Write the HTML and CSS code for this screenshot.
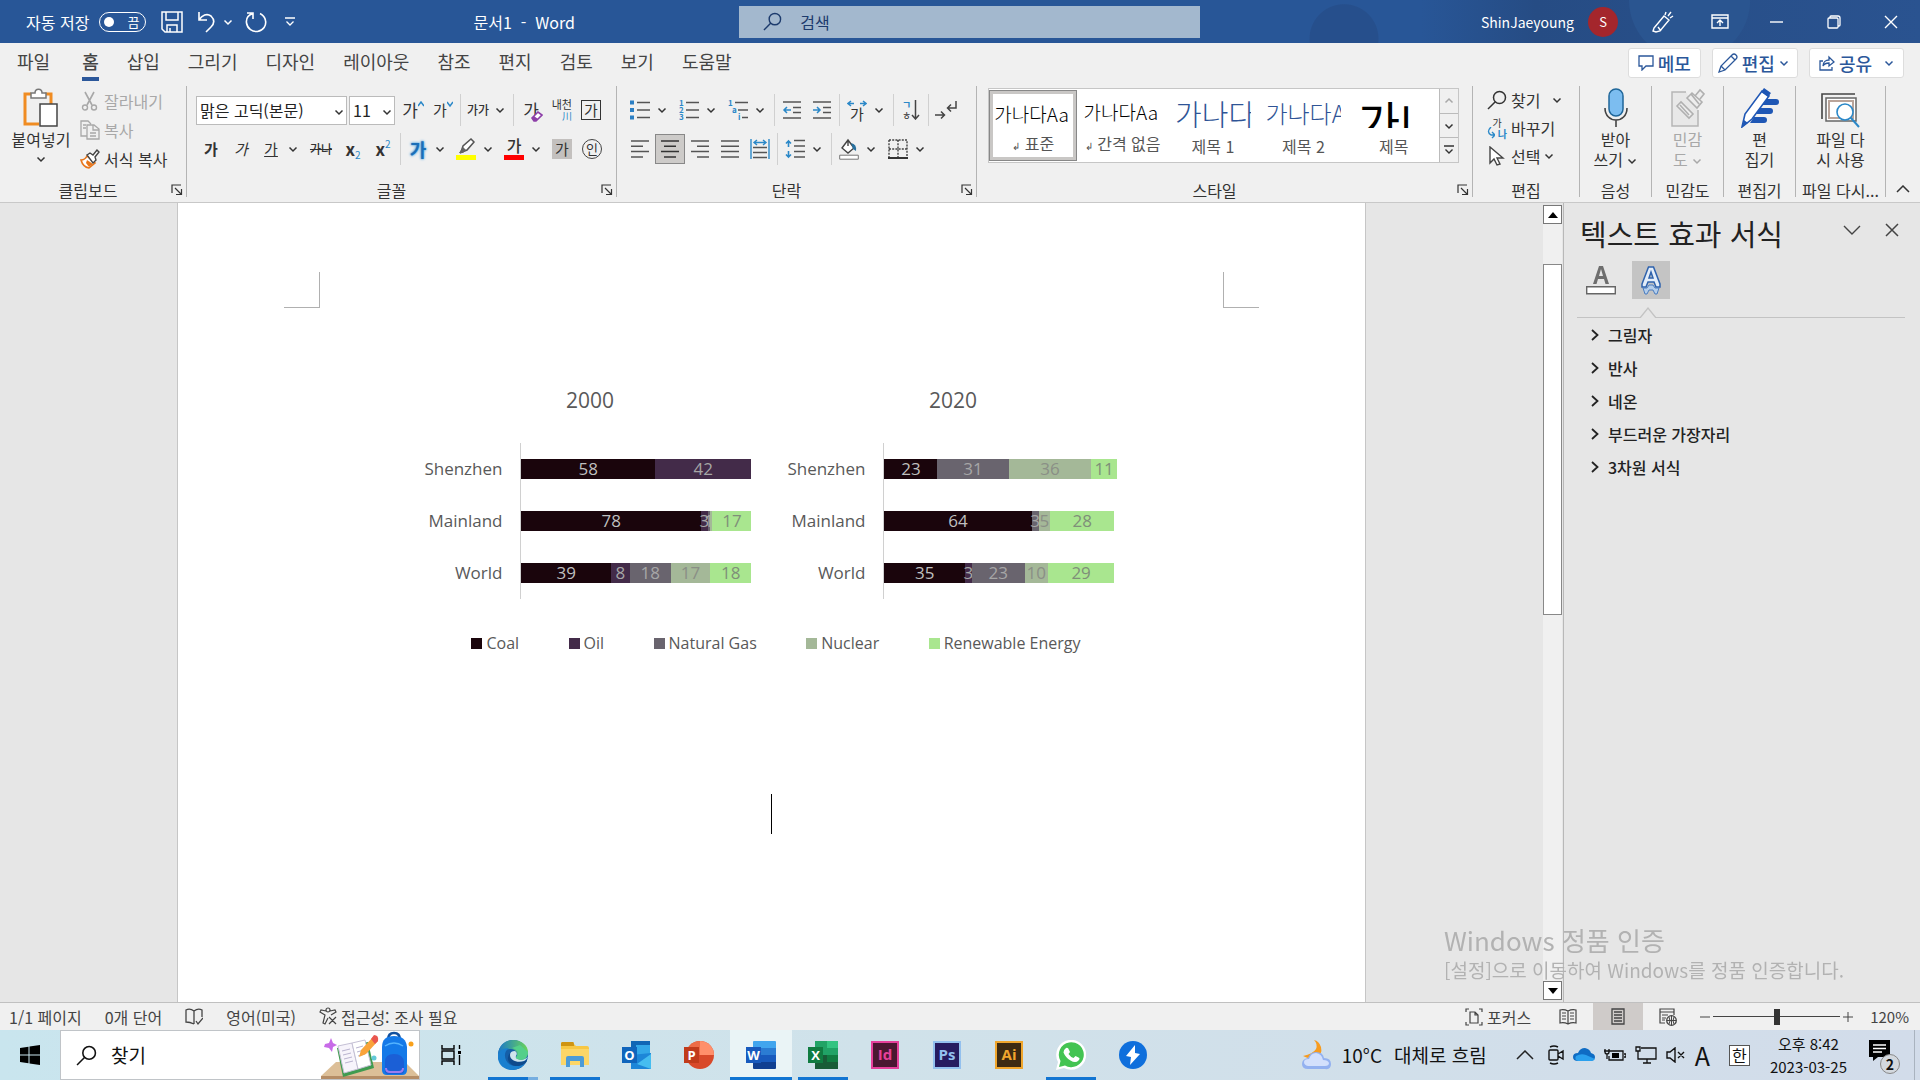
FILE: index.html
```html
<!doctype html>
<html lang="ko">
  <head>
    <meta charset="UTF-8" />
    <meta name="viewport" content="width=device-width, initial-scale=1.0" />
    <title>문서1 - Word</title>
    <link rel="stylesheet" href="styles.css">
  </head>
  <body>
    <svg class="sprite" aria-hidden="true">
      <symbol id="chev" viewBox="0 0 10 10"><path d="M1.500 3.500 5 7l3.500-3.500" fill="none" stroke="currentColor" stroke-width="1.500"/></symbol>
      <symbol id="launch" viewBox="0 0 12 12"><path d="M1 9V1h9M4 4l6 6M10.500 5v5.500H5" fill="none" stroke="currentColor" stroke-width="1.200"/></symbol>
      <symbol id="glass" viewBox="0 0 20 20"><g fill="none" stroke="currentColor" stroke-width="1.500"><circle cx="12.500" cy="7.500" r="6"/><path d="M8.300 11.700 1 19"/></g></symbol>
      <symbol id="right" viewBox="0 0 8 12"><path d="m1 1 5.500 5L1 11" fill="none" stroke="#222" stroke-width="1.800"/></symbol>
    </svg>

    <header class="titlebar">
      <div class="quick">
        <label class="autosave">자동 저장 <input type="checkbox" class="toggle-input"><span class="toggle">끔</span></label>
        <button class="quick-btn save" aria-label="저장"><svg width="22" height="22" viewBox="0 0 22 22"><path d="M1 1h20v20H4l-3-3zM5 1v8h12V1M6 21v-7h10v7M9 17v4" fill="none" stroke="#fff" stroke-width="1.500"/></svg></button>
        <button class="quick-btn undo" aria-label="실행 취소"><svg width="20" height="22" viewBox="0 0 20 22"><path d="M2 1v8h8M2 9c3-5 8-7 12-4 4 4 3 8 0 11l-5 5" fill="none" stroke="#fff" stroke-width="1.600"/></svg><svg class="tiny"><use href="#chev"/></svg></button>
        <button class="quick-btn redo" aria-label="다시 실행"><svg width="22" height="22" viewBox="0 0 22 22"><path d="M2 2h6v6M8 2.500C3 4 1 8 1.500 12c1 6 6 9 11 8.500 6-1 9-6 8-11-.5-3-2.500-5.500-5.500-7" fill="none" stroke="#fff" stroke-width="1.600"/></svg></button>
        <button class="quick-btn" aria-label="빠른 실행 도구 모음 사용자 지정"><svg width="10" height="10" viewBox="0 0 10 10"><path d="M0 1h10M1.500 4.500 5 8l3.500-3.500" fill="none" stroke="#fff" stroke-width="1.300"/></svg></button>
        <span class="doc-name">문서1&nbsp; -&nbsp; Word</span>
      </div>
      <label class="search"><svg width="19" height="19"><use href="#glass"/></svg><input type="search" placeholder="검색" aria-label="검색"></label>
      <div class="account">
        <span class="user">ShinJaeyoung</span><span class="avatar">S</span>
        <button class="win-btn" aria-label="그리기 도구"><svg width="22" height="22" viewBox="0 0 22 22"><path d="M2 17 12 5l5 4-9 11-4 1-3-1zM6 16l3 4M13 4l1-3M16 5l3-4M18 7l3-2" fill="none" stroke="#fff" stroke-width="1.400"/></svg></button>
        <button class="win-btn" aria-label="리본 메뉴 표시 옵션"><svg width="18" height="16" viewBox="0 0 18 16"><path d="M1 1h16v13H1zM1 4h16M9 12V6M6 9l3-3 3 3" fill="none" stroke="#fff" stroke-width="1.400"/></svg></button>
        <button class="win-btn" aria-label="최소화"><svg width="14" height="14" viewBox="0 0 14 14"><path d="M0 7h13" stroke="#fff" stroke-width="1.400"/></svg></button>
        <button class="win-btn" aria-label="이전 크기로 복원"><svg width="14" height="14" viewBox="0 0 14 14"><path d="M3 3V2q0-1 1-1h7q2 0 2 2v7q0 1-1 1h-1M1 4q0-1 1-1h8q1 0 1 1v8q0 1-1 1H2q-1 0-1-1z" fill="none" stroke="#fff" stroke-width="1.300"/></svg></button>
        <button class="win-btn" aria-label="닫기"><svg width="14" height="14" viewBox="0 0 14 14"><path d="m1 1 12 12M13 1 1 13" stroke="#fff" stroke-width="1.400"/></svg></button>
      </div>
    </header>

    <nav class="tabs">
      <a href="#file" class="file">파일</a><a href="#home" class="active">홈</a><a href="#insert">삽입</a><a href="#draw">그리기</a><a href="#design">디자인</a><a href="#layout">레이아웃</a><a href="#refs">참조</a><a href="#mail">편지</a><a href="#review">검토</a><a href="#view">보기</a><a href="#help">도움말</a>
      <div class="tab-actions">
        <button><svg width="16" height="16" viewBox="0 0 16 16"><path d="M1 1h14v10H8l-4 4v-4H1z" fill="none" stroke="currentColor" stroke-width="1.300"/></svg>메모</button>
        <button><svg width="20" height="20" viewBox="0 0 20 20"><path d="m1 19 2-6L14 2q2-2 4 0t0 4L7 17zM13 3l4 4M3 13l4 4" fill="none" stroke="currentColor" stroke-width="1.300"/></svg>편집<svg class="tiny"><use href="#chev"/></svg></button>
        <button><svg width="16" height="16" viewBox="0 0 16 16"><path d="M4 6H1v9h12v-3M4 11c0-4 3-6 6-6V2l5 5-5 4V8c-3 0-5 1-6 3z" fill="none" stroke="currentColor" stroke-width="1.300"/></svg>공유<svg class="tiny share-chev"><use href="#chev"/></svg></button>
      </div>
    </nav>

    <section class="ribbon">
      <div class="group clipboard">
        <div class="group-body">
          <button class="big paste"><svg width="36" height="40" viewBox="0 0 36 40"><path d="M8 6H2v30h14M22 6h6v10" fill="none" stroke="#f08c22" stroke-width="3"/><path d="M8 10V5h4c0-5 7-5 7 0h4v5z" fill="#fff" stroke="#777" stroke-width="1.500"/><path d="M17 16h17v22H17z" fill="#fff" stroke="#444" stroke-width="1.500"/></svg>붙여넣기<svg class="tiny"><use href="#chev"/></svg></button>
          <div class="stack">
            <button disabled><svg width="18" height="20" viewBox="0 0 18 20"><path d="m4 1 7 13M13 1 6 14" stroke="currentColor" stroke-width="1.600"/><g fill="none" stroke="currentColor" stroke-width="1.400"><circle cx="4" cy="16.500" r="2.500"/><circle cx="13" cy="16.500" r="2.500"/></g></svg>잘라내기</button>
            <button disabled><svg width="18" height="20" viewBox="0 0 20 20"><path d="M7 16H1V1h7l3 3M7 5h7l5 4v10H7zM13 5v5h6M10 13h6M10 16h6M3 5h3M3 8h3" fill="none" stroke="currentColor" stroke-width="1.300"/></svg>복사</button>
            <button><svg width="20" height="20" viewBox="0 0 20 20"><path d="M1 11q4 0 6-4l8 7-6 5q-6-1-8-8z" fill="#fff" stroke="#e8761b" stroke-width="1.600"/><path d="m6 14 3 4 4-3-6-4z" fill="#e8761b"/><path d="m7 6 3-2 3 2 4-5 2 2-4 5 1 3-3 3z" fill="#fff" stroke="#444" stroke-width="1.400"/></svg>서식 복사</button>
          </div>
        </div>
        <div class="group-label with-launcher">클립보드<svg class="launcher"><use href="#launch"/></svg></div>
      </div>

      <div class="group font">
        <div class="rows">
          <div class="row">
            <span class="combo family"><select aria-label="글꼴"><option>맑은 고딕(본문)</option></select><svg class="tiny"><use href="#chev"/></svg></span>
            <span class="combo size"><select aria-label="글꼴 크기"><option>11</option></select><svg class="tiny"><use href="#chev"/></svg></span>
            <button class="ib" aria-label="글꼴 크기 크게"><span class="g16">가</span><svg width="6" height="18" viewBox="0 0 6 18"><path d="m0 5 3-4 3 4" fill="none" stroke="#2b88c8" stroke-width="1.500"/></svg></button>
            <button class="ib" aria-label="글꼴 크기 작게"><span class="g14">가</span><svg width="6" height="18" viewBox="0 0 6 18"><path d="m0 1 3 4 3-4" fill="none" stroke="#2b88c8" stroke-width="1.500"/></svg></button>
            <i class="sep"></i>
            <button class="ib g12">가가</button><button class="chev" aria-label="대/소문자"><svg class="tiny"><use href="#chev"/></svg></button>
            <i class="sep"></i>
            <button class="ib" aria-label="서식 지우기"><span class="g16">가</span><svg class="eraser" width="12" height="12" viewBox="0 0 12 12"><path d="m1 8 6-6 4 3-6 6H3z" fill="#fff" stroke="#8d3fa8" stroke-width="1.600"/><path d="m1 8 2-2 4 3-2 2H3z" fill="#8d3fa8"/></svg></button>
            <button class="ib ruby" aria-label="윗주 달기"><span>내천</span><b>川</b></button>
            <button class="ib"><span class="boxed">가</span></button>
          </div>
          <div class="row">
            <button class="ib g14"><b>가</b></button>
            <button class="ib g14 italic">가</button>
            <button class="ib g14"><u>가</u></button><button class="chev" aria-label="밑줄"><svg class="tiny"><use href="#chev"/></svg></button>
            <button class="ib g12 strike"><s>가나</s></button>
            <button class="ib script"><b>x</b><sub>2</sub></button>
            <button class="ib script"><b>x</b><sup>2</sup></button>
            <i class="sep"></i>
            <button class="ib glow">가</button><button class="chev" aria-label="텍스트 효과"><svg class="tiny"><use href="#chev"/></svg></button>
            <button class="ib" aria-label="강조 색"><svg width="20" height="22" viewBox="0 0 20 22"><path d="m5 14 2-6 8-7 3 3-7 8-5 2-2 1z" fill="#fff" stroke="#555" stroke-width="1.500"/><path d="m3 15 4-6 3 3-3 3z" fill="#666"/><path d="M0 17h20v5H0z" fill="#ff0"/></svg></button><button class="chev" aria-label="강조 색 선택"><svg class="tiny"><use href="#chev"/></svg></button>
            <button class="ib"><span class="fontcolor">가</span></button><button class="chev" aria-label="글꼴 색"><svg class="tiny"><use href="#chev"/></svg></button>
            <button class="ib"><span class="shaded">가</span></button>
            <button class="ib"><span class="circled">인</span></button>
          </div>
        </div>
        <div class="group-label with-launcher">글꼴<svg class="launcher"><use href="#launch"/></svg></div>
      </div>

      <div class="group para">
        <div class="rows">
          <div class="row">
            <button class="ib" aria-label="글머리 기호"><svg width="20" height="20" viewBox="0 0 20 20"><path d="M7 2.500h13M7 10h13M7 17.500h13" stroke="#555" stroke-width="1.500"/><path d="M0 .5h4v4H0zM0 8h4v4H0zM0 15.500h4v4H0z" fill="#2b7fc4"/></svg></button><button class="chev" aria-label="글머리 기호 선택"><svg class="tiny"><use href="#chev"/></svg></button>
            <button class="ib" aria-label="번호 매기기"><svg width="20" height="20" viewBox="0 0 20 20"><path d="M7 2.500h13M7 10h13M7 17.500h13" stroke="#555" stroke-width="1.500"/><g class="num"><text x="0" y="6">1</text><text x="0" y="13">2</text><text x="0" y="20">3</text></g></svg></button><button class="chev" aria-label="번호 선택"><svg class="tiny"><use href="#chev"/></svg></button>
            <button class="ib" aria-label="다단계 목록"><svg width="20" height="20" viewBox="0 0 20 20"><path d="M7 2.500h13M10 10h10M14 17.500h6" stroke="#555" stroke-width="1.500"/><g class="num"><text x="0" y="6">1</text><text x="4" y="13">a</text><text x="10" y="20">i</text></g></svg></button><button class="chev" aria-label="다단계 선택"><svg class="tiny"><use href="#chev"/></svg></button>
            <i class="sep"></i>
            <button class="ib" aria-label="내어쓰기"><svg width="20" height="18" viewBox="0 0 20 18"><path d="M1 1h18M11 6.500h8M11 11.500h8M1 17h18" stroke="#555" stroke-width="1.500"/><path d="M9 9H2M5 6 2 9l3 3" fill="none" stroke="#2b88c8" stroke-width="1.500"/></svg></button>
            <button class="ib" aria-label="들여쓰기"><svg width="20" height="18" viewBox="0 0 20 18"><path d="M1 1h18M11 6.500h8M11 11.500h8M1 17h18" stroke="#555" stroke-width="1.500"/><path d="M1 9h7M5 6l3 3-3 3" fill="none" stroke="#2b88c8" stroke-width="1.500"/></svg></button>
            <i class="sep"></i>
            <button class="ib spread" aria-label="한글 입력 체계 모양"><svg width="20" height="7" viewBox="0 0 20 7"><path d="M7 3.500H1M4 1 1 3.500 4 6M13 3.500h6M16 1l3 2.500L16 6" fill="none" stroke="#2b88c8" stroke-width="1.500"/></svg><span>가</span></button><button class="chev" aria-label="모양 선택"><svg class="tiny"><use href="#chev"/></svg></button>
            <i class="sep"></i>
            <button class="ib" aria-label="정렬"><span class="sort"><b>ㄱ</b><span>ㅎ</span></span><svg width="9" height="20" viewBox="0 0 9 20"><path d="M4.500 0v19M1 15l3.500 4L8 15" fill="none" stroke="#444" stroke-width="1.500"/></svg></button>
            <i class="sep"></i>
            <button class="ib" aria-label="편집 기호 표시"><svg width="22" height="20" viewBox="0 0 22 20"><path d="M0 15h9M6 11.500 9.500 15 6 18.500M21 1v7h-8M16 4.500 12.500 8l3.500 3.500" fill="none" stroke="#444" stroke-width="1.500"/></svg></button>
          </div>
          <div class="row">
            <button class="ib" aria-label="왼쪽 맞춤"><svg width="18" height="18" viewBox="0 0 18 18"><path d="M0 1h18M0 6.300h12M0 11.600h18M0 17h12" stroke="#555" stroke-width="1.500"/></svg></button>
            <button class="ib pressed" aria-label="가운데 맞춤"><svg width="18" height="18" viewBox="0 0 18 18"><path d="M0 1h18M3 6.300h12M0 11.600h18M3 17h12" stroke="#333" stroke-width="1.500"/></svg></button>
            <button class="ib" aria-label="오른쪽 맞춤"><svg width="18" height="18" viewBox="0 0 18 18"><path d="M0 1h18M6 6.300h12M0 11.600h18M6 17h12" stroke="#555" stroke-width="1.500"/></svg></button>
            <button class="ib" aria-label="양쪽 맞춤"><svg width="18" height="18" viewBox="0 0 18 18"><path d="M0 1h18M0 6.300h18M0 11.600h18M0 17h18" stroke="#555" stroke-width="1.500"/></svg></button>
            <button class="ib" aria-label="균등 분할"><svg width="20" height="20" viewBox="0 0 20 20"><path d="M3 8.500h14M3 13.500h14M3 18.500h14" stroke="#555" stroke-width="1.500"/><path d="M1 0v20M19 0v20M4 3.500h12M7 1 4 3.500 7 6M13 1l3 2.500L13 6" fill="none" stroke="#2b88c8" stroke-width="1.400"/></svg></button>
            <i class="sep"></i>
            <button class="ib" aria-label="줄 간격"><svg width="20" height="20" viewBox="0 0 20 20"><path d="M9 1.500h11M9 7h11M9 12.500h11M9 18h11" stroke="#555" stroke-width="1.500"/><path d="M3.500 2v6M1 4.500 3.500 2 6 4.500M3.500 12v6M1 15.500 3.500 18 6 15.500" fill="none" stroke="#2b88c8" stroke-width="1.600"/></svg></button><button class="chev" aria-label="간격 선택"><svg class="tiny"><use href="#chev"/></svg></button>
            <i class="sep"></i>
            <button class="ib" aria-label="음영"><svg width="20" height="22" viewBox="0 0 20 22"><path d="m9 2 6 8-6 5-6-5zM9 2v6" fill="#fff" stroke="#444" stroke-width="1.400"/><path d="M12 5q6 1 5 8l-3-2z" fill="#27709e"/><path d="M.7 17.200h18.600v4H.7z" fill="#fff" stroke="#777"/></svg></button><button class="chev" aria-label="음영 선택"><svg class="tiny"><use href="#chev"/></svg></button>
            <button class="ib" aria-label="테두리"><svg width="20" height="20" viewBox="0 0 20 20"><path d="M1 1h18v17M1 1v17M10 1v17M1 10h18" fill="none" stroke="#444" stroke-width="1.400" stroke-dasharray="2 1.200"/><path d="M0 19h20" stroke="#333" stroke-width="2"/></svg></button><button class="chev" aria-label="테두리 선택"><svg class="tiny"><use href="#chev"/></svg></button>
          </div>
        </div>
        <div class="group-label with-launcher">단락<svg class="launcher"><use href="#launch"/></svg></div>
      </div>

      <div class="group styles">
        <div class="gallery">
          <button class="style selected"><span class="preview">가나다Aa</span><span><small>↲</small> 표준</span></button>
          <button class="style"><span class="preview">가나다Aa</span><span><small>↲</small> 간격 없음</span></button>
          <button class="style"><span class="preview h1">가나다</span><span>제목 1</span></button>
          <button class="style"><span class="preview h2">가나다A</span><span>제목 2</span></button>
          <button class="style"><span class="preview title">가나</span><span>제목</span></button>
          <div class="gallery-nav">
            <button disabled aria-label="위로"><svg class="tiny up"><use href="#chev"/></svg></button>
            <button aria-label="아래로"><svg class="tiny"><use href="#chev"/></svg></button>
            <button aria-label="자세히"><svg width="10" height="10" viewBox="0 0 10 10"><path d="M0 1h10M1.500 4.500 5 8l3.500-3.500" fill="none" stroke="#333" stroke-width="1.400"/></svg></button>
          </div>
        </div>
        <div class="group-label with-launcher">스타일<svg class="launcher"><use href="#launch"/></svg></div>
      </div>

      <div class="group editing">
        <div class="stack">
          <button><svg width="20" height="20"><use href="#glass"/></svg>찾기<svg class="tiny far"><use href="#chev"/></svg></button>
          <button><span class="swap"><span>가</span><b>나</b><svg width="8" height="12" viewBox="0 0 8 12"><path d="M4 0Q-1 5 4 8h3M5 5l3 3-3 3" fill="none" stroke="#2b88c8" stroke-width="1.400"/></svg></span>바꾸기</button>
          <button><svg width="20" height="20" viewBox="0 0 20 20"><path d="M3 1v16l4-4 3 6 3-1-3-6h6z" fill="#fff" stroke="#444" stroke-width="1.400"/></svg>선택<svg class="tiny"><use href="#chev"/></svg></button>
        </div>
        <div class="group-label">편집</div>
      </div>
      <div class="group narrow">
        <button class="big"><svg width="24" height="40" viewBox="0 0 24 40"><rect x="5" y="1" width="14" height="27" rx="7" fill="#7cbdf0" stroke="#1f6699" stroke-width="1.500"/><path d="M1 20c0 16 22 16 22 0M12 32v7" fill="none" stroke="#444" stroke-width="1.600"/></svg><span>받아<br>쓰기 <svg class="tiny"><use href="#chev"/></svg></span></button>
        <div class="group-label">음성</div>
      </div>
      <div class="group narrow">
        <button class="big" disabled><svg width="34" height="40" viewBox="0 0 34 40"><path d="M15 4H1v34h26V22" fill="#e8e8e8" stroke="#b5b5b5" stroke-width="1.500"/><path d="m6 18 4-4 12 12-4 4zM9 17l9 10M16 10l5-5 10 9-5 6zM24 8l5-6 4 4-4 5M20 6l8 10" fill="#eee" stroke="#b0b0b0" stroke-width="1.600"/></svg><span>민감<br>도 <svg class="tiny"><use href="#chev"/></svg></span></button>
        <div class="group-label">민감도</div>
      </div>
      <div class="group narrow">
        <button class="big"><svg width="38" height="40" viewBox="0 0 38 40"><path d="M22 11h13q3 0 3 3t-3 3H20zM18 20h11q3 0 3 3t-3 3H15zM13 29h10q3 0 3 3t-3 3H9z" fill="#1f57b5"/><path d="M1 39 4 26 21 3l7 5-17 23z" fill="#fff" stroke="#1f57b5" stroke-width="1.600"/><path d="m20 4 3-4 7 5-3 4zM1 39l2-7 4 3z" fill="#1f57b5"/></svg><span>편<br>집기</span></button>
        <div class="group-label">편집기</div>
      </div>
      <div class="group reuse">
        <button class="big"><svg width="40" height="36" viewBox="0 0 40 36"><path d="M1 27V2h33" fill="none" stroke="#444" stroke-width="1.600"/><path d="M5 6h30v23H5z" fill="#fff" stroke="#666" stroke-width="1.500"/><path d="M8 9h24v17H8z" fill="#fff" stroke="#b9a49a" stroke-width="2"/><path d="m30 26 8 9" stroke="#2b88c8" stroke-width="2"/><circle cx="24" cy="20" r="8" fill="#fff" stroke="#2b88c8" stroke-width="1.600"/></svg><span>파일 다<br>시 사용</span></button>
        <div class="group-label">파일 다시...</div>
      </div>
      <button class="collapse" aria-label="리본 메뉴 축소"><svg width="14" height="8" viewBox="0 0 14 8"><path d="m1 7 6-6 6 6" fill="none" stroke="#333" stroke-width="1.500"/></svg></button>
    </section>

    <main class="workspace">
      <div class="canvas">
        <article class="page">
          <div class="margins"><i class="corner left"></i><i class="corner right"></i></div>
          <figure class="charts">
            <div class="plots">
              <section class="plot">
                <h2>2000</h2>
                <div class="plot-body">
                  <div class="cats"><span>Shenzhen</span><span>Mainland</span><span>World</span></div>
                  <div class="bars">
                    <div class="bar"><span class="coal" style="width:58%">58</span><span class="oil" style="width:42%">42</span></div>
                    <div class="bar"><span class="coal" style="width:78%">78</span><span class="oil" style="width:3%">3</span><span class="gas" style="width:1%">1</span><span class="nuclear" style="width:1%"></span><span class="renew" style="width:17%">17</span></div>
                    <div class="bar"><span class="coal" style="width:39%">39</span><span class="oil" style="width:8%">8</span><span class="gas" style="width:18%">18</span><span class="nuclear" style="width:17%">17</span><span class="renew" style="width:18%">18</span></div>
                  </div>
                </div>
              </section>
              <section class="plot">
                <h2>2020</h2>
                <div class="plot-body">
                  <div class="cats"><span>Shenzhen</span><span>Mainland</span><span>World</span></div>
                  <div class="bars">
                    <div class="bar"><span class="coal" style="width:23%">23</span><span class="gas" style="width:31%">31</span><span class="nuclear" style="width:36%">36</span><span class="renew" style="width:11%">11</span></div>
                    <div class="bar"><span class="coal" style="width:64%">64</span><span class="gas" style="width:3%">3</span><span class="nuclear" style="width:5%">5</span><span class="renew" style="width:28%">28</span></div>
                    <div class="bar"><span class="coal" style="width:35%">35</span><span class="oil" style="width:3%">3</span><span class="gas" style="width:23%">23</span><span class="nuclear" style="width:10%">10</span><span class="renew" style="width:29%">29</span></div>
                  </div>
                </div>
              </section>
            </div>
            <figcaption class="legend">
              <span><i class="coal"></i>Coal</span><span><i class="oil"></i>Oil</span><span><i class="gas"></i>Natural Gas</span><span><i class="nuclear"></i>Nuclear</span><span><i class="renew"></i>Renewable Energy</span>
            </figcaption>
          </figure>
          <div class="caret"></div>
        </article>
      </div>
      <div class="scrollbar">
        <button aria-label="위로 스크롤"><svg width="10" height="6" viewBox="0 0 10 6"><path d="M5 0l5 6H0z"/></svg></button>
        <div class="track"><div class="thumb"></div></div>
        <button aria-label="아래로 스크롤"><svg width="10" height="6" viewBox="0 0 10 6"><path d="M5 6l5-6H0z"/></svg></button>
      </div>
      <aside class="panel">
        <div class="panel-head">
          <h1>텍스트 효과 서식</h1>
          <button aria-label="작업창 옵션"><svg width="18" height="10" viewBox="0 0 18 10"><path d="m1 1 8 8 8-8" fill="none" stroke="#444" stroke-width="1.400"/></svg></button>
          <button aria-label="닫기"><svg width="14" height="14" viewBox="0 0 14 14"><path d="m1 1 12 12M13 1 1 13" stroke="#444" stroke-width="1.500"/></svg></button>
        </div>
        <div class="panel-tabs">
          <button aria-label="텍스트 채우기 및 윤곽선"><svg width="30" height="30" viewBox="0 0 30 30"><path d="M7 19 13 1h4l6 18h-3.500l-1.500-5h-6l-1.500 5zM13 11h4l-2-7z" fill="#6e6e6e"/><path d="M.7 21.700h28.600v7H.7z" fill="#fff" stroke="#666" stroke-width="1.400"/></svg></button>
          <button class="on" aria-label="텍스트 효과"><svg width="22" height="30" viewBox="0 0 22 30"><path d="M2 19 8.500 2h5L20 19v3h-4l-2-5H8l-2 5H2zM9 13h4l-2-6z" fill="#e3edf9" stroke="#2e62ad" stroke-width="1.500"/><path d="M3 23h4l2-3h4l2 3h4l-2 6h-2l-2-4H9l-2 4H5z" fill="#b4cdea" stroke="#4a7dc0"/></svg></button>
        </div>
        <div class="panel-line"><svg width="18" height="11" viewBox="0 0 18 11"><path d="m1 11 8-10 8 10" fill="#e6e6e6" stroke="#c3c3c3" stroke-width="1.300"/></svg></div>
        <ul class="effects">
          <li><button><svg width="8" height="12"><use href="#right"/></svg>그림자</button></li>
          <li><button><svg width="8" height="12"><use href="#right"/></svg>반사</button></li>
          <li><button><svg width="8" height="12"><use href="#right"/></svg>네온</button></li>
          <li><button><svg width="8" height="12"><use href="#right"/></svg>부드러운 가장자리</button></li>
          <li><button><svg width="8" height="12"><use href="#right"/></svg>3차원 서식</button></li>
        </ul>
      </aside>
    </main>

    <footer class="status">
      <span>1/1 페이지</span><span>0개 단어</span>
      <svg width="18" height="18" viewBox="0 0 18 18"><path d="M9 3v13M9 3Q5 0 1 2v12q4 0 8 2M9 3q4-3 8-1v7M11 13l2 3 5-6" fill="none" stroke="#444" stroke-width="1.300"/></svg>
      <span>영어(미국)</span>
      <span class="access"><svg width="18" height="18" viewBox="0 0 18 18"><path d="M9 1a2 2 0 1 1 0 4 2 2 0 0 1 0-4zM7 4 2 3 1 5l5 3-2 8 2 1 3-6M11 4l5-1 1 2-5 3M10 10l7 7M17 10l-7 7" fill="none" stroke="#444" stroke-width="1.200"/></svg>접근성: 조사 필요</span>
      <div class="views">
        <button class="focus"><svg width="18" height="18" viewBox="0 0 18 18"><path d="M4 1H1v3M14 1h3v3M1 14v3h3M17 14v3h-3M5 4h5l3 3v8H5zM10 4v3h3" fill="none" stroke="#444" stroke-width="1.200"/></svg>포커스</button>
        <button class="view" aria-label="읽기 모드"><svg width="18" height="16" viewBox="0 0 18 16"><path d="M9 2v13M9 2Q5 0 1 1v13q4-1 8 1 4-2 8-1V1q-4-1-8 1zM3 4h4M3 7h4M3 10h4M11 4h4M11 7h4M11 10h4" fill="none" stroke="#444" stroke-width="1.200"/></svg></button>
        <button class="view current" aria-label="인쇄 모양"><svg width="14" height="17" viewBox="0 0 14 17"><path d="M1 1h12v15H1zM3 4h8M3 7h8M3 10h8M3 13h8" fill="none" stroke="#444" stroke-width="1.300"/></svg></button>
        <button class="view" aria-label="웹 레이아웃"><svg width="18" height="18" viewBox="0 0 18 18"><path d="M6 15H1V1h14v6M1 4h14M3 7h6M3 10h4M3 12h3" fill="none" stroke="#444" stroke-width="1.200"/><circle cx="12.500" cy="12.500" r="4.800" fill="#eee" stroke="#444" stroke-width="1.300"/><path d="M8 12.500h9M12.500 8v9M10 9q2 4 0 7M15 9q-2 4 0 7" fill="none" stroke="#444"/></svg></button>
        <button class="zoom-btn" aria-label="축소"><svg width="12" height="12" viewBox="0 0 12 12"><path d="M1 6h10" stroke="#444"/></svg></button>
        <input type="range" min="10" max="230" value="120" aria-label="확대/축소">
        <button class="zoom-btn" aria-label="확대"><svg width="12" height="12" viewBox="0 0 12 12"><path d="M1 6h10M6 1v10" stroke="#444"/></svg></button>
        <span class="zoom-value">120%</span>
      </div>
    </footer>

    <nav class="taskbar">
      <button class="start" aria-label="시작"><svg width="20" height="20" viewBox="0 0 20 20"><path d="M0 3l8.500-1.200v7.700H0zM9.500 1.600 20 0v9.500H9.500zM0 10.500h8.500v7.700L0 17zM9.500 10.500H20V20L9.500 18.400z"/></svg></button>
      <label class="task-search"><svg width="21" height="21"><use href="#glass"/></svg><input type="search" placeholder="찾기" aria-label="찾기">
        <svg width="98" height="48" viewBox="0 0 98 48"><path d="M15 31h69l14 14H0z" fill="#dcbf98"/><path d="M0 45h98v3H0z" fill="#b58d66"/><path d="m16 17 31-6 6 26-31 9z" fill="#3f9b50"/><path d="m17 15 14-3 6 26-14 4z" fill="#f7f4fb" stroke="#c5c0d5"/><path d="m31 12 13-3 6 25-13 4z" fill="#fff" stroke="#c5c0d5"/><path d="m21 20 8-2M22 24l8-2M23 28l8-2M24 32l8-2M35 17l7-2M36 21l7-2M37 25l7-2" stroke="#b9b3cf"/><path d="m40 19-2 7 7-3 12-13-5-4z" fill="#f9a33a"/><path d="m50 8 3-4q5 0 4 6l-3 3z" fill="#e9564f"/><path d="M4 13l4-1 2-5 2 5 4 2-4 2-1 5-3-4-5-1z" fill="#c86be8"/><path d="M67 9q0-7 6-7t6 7" fill="none" stroke="#12509e" stroke-width="2.500"/><path d="M61 16q0-11 12-11t13 11v23q0 5-5 5H66q-5 0-5-5z" fill="#1479e8"/><path d="M64 31q0-8 9-8t10 8v9q0 3-3 3H67q-3 0-3-3z" fill="#1b5fd6"/><path d="M65 37q0 4 4 4h9q4 0 4-4" fill="none" stroke="#9b7df0" stroke-width="2"/><path d="M64 15q9-6 18 0" fill="none" stroke="#54b4ff" stroke-width="1.500"/><circle cx="90" cy="13" r="2.500" fill="#f9a11b"/><circle cx="53" cy="27" r="2.500" fill="#62c9d8"/></svg>
      </label>
      <button class="app" aria-label="작업 보기"><svg width="20" height="20" viewBox="0 0 20 20"><path d="M1 0v4h12V0M1 6h12v8H1zM1 20v-4h12v4M18.500 0v4M18.500 10v10" fill="none" stroke="#000" stroke-width="1.400"/><path d="M17 6h3v3h-3z"/></svg></button>
      <button class="app open partial" aria-label="Edge"><svg width="30" height="30" viewBox="0 0 30 30"><defs><linearGradient id="edge1"><stop stop-color="#1b78c9"/><stop offset="1" stop-color="#6bd558"/></linearGradient></defs><circle cx="15" cy="15" r="15" fill="#155fa8"/><path d="M0 14C1 4 9 0 15 0c9 0 15 6 15 12 0 8-9 9-12 6 2-2 2-8-5-9-6 0-11 2-13 5z" fill="url(#edge1)"/><path d="M0 14q3-6 11-6c-7 4-5 17 6 18 4 0 8-1 11-4-6 11-25 11-28-3z" fill="#1a7fcf"/><path d="M29 20q-5 3-10 1-4-2-2-5 1-3-3-4-5 2-4 8c2 6 10 8 16 4 2-1 3-3 3-4z" fill="#0f4a8c"/><path d="M30 17q-5 4-10 2-3-1-2-3 2-3-1-5-5 0-5 4c0 6 8 8 14 6q2-1 4-4z" fill="#cfe4ec"/><path d="M30 12q0 7-7 8-6-1-5-3 3-3 1-6-1-2-5-3l8-3z" fill="#54cf8a"/></svg></button>
      <button class="app open" aria-label="파일 탐색기"><svg width="28" height="26" viewBox="0 0 28 26"><path d="M0 2q0-2 2-2h9q2 0 2 2l2 2h11q2 0 2 2v17H0z" fill="#f7c744"/><path d="M1 0h11q1 0 1 4H0V1z" fill="#cf9413"/><path d="M0 7h28v16H0z" fill="#fcd667"/><path d="M5 25v-9q0-2 2-2h14q2 0 2 2v9h-4v-6H9v6z" fill="#4c9bd6"/></svg></button>
      <button class="app" aria-label="Outlook"><svg width="30" height="28" viewBox="0 0 30 28"><path d="M9 0h19v14H9z" fill="#1066b5"/><path d="M14 4h14v12H14z" fill="#33a7e8"/><path d="M9 14l20-2v16H9z" fill="#1d86d8"/><path d="m29 13-14 10 14 5z" fill="#45bdf0"/><path d="M0 6h15v16H0z" fill="#0f65bc"/><text x="7.500" y="18.500" class="logo">O</text></svg></button>
      <button class="app" aria-label="PowerPoint"><svg width="30" height="28" viewBox="0 0 30 28"><circle cx="16" cy="14" r="14" fill="#d8492a"/><path d="M16 0a14 14 0 0 1 14 14H16z" fill="#ff8f6b"/><path d="M16 0v14H2A14 14 0 0 1 16 0z" fill="#ed6c47"/><path d="M0 6h15v16H0z" fill="#c13b1b"/><text x="7.500" y="18.500" class="logo">P</text></svg></button>
      <button class="app open active" aria-label="Word"><svg width="30" height="28" viewBox="0 0 30 28"><path d="M7 1q0-1 1-1h21q1 0 1 1v6H7z" fill="#41a5ee"/><path d="M7 7h23v7H7z" fill="#2b7cd3"/><path d="M7 14h23v7H7z" fill="#185abd"/><path d="M7 21h23v6q0 1-1 1H8q-1 0-1-1z" fill="#103f91"/><path d="M0 6h15v16H0z" fill="#185abd"/><text x="7.500" y="18.500" class="logo">W</text></svg></button>
      <button class="app open" aria-label="Excel"><svg width="30" height="28" viewBox="0 0 30 28"><path d="M7 0h12v14H7z" fill="#21a366"/><path d="M19 0h11v7H19z" fill="#33c481"/><path d="M19 7h11v7H19z" fill="#21a366"/><path d="M7 14h12v14H7z" fill="#185c37"/><path d="M19 14h11v7H19z" fill="#107c41"/><path d="M19 21h11v7H19z" fill="#185c37"/><path d="M0 6h15v16H0z" fill="#107c41"/><text x="7.500" y="18.500" class="logo">X</text></svg></button>
      <button class="app"><span class="adobe id">Id</span></button>
      <button class="app"><span class="adobe ps">Ps</span></button>
      <button class="app"><span class="adobe ai">Ai</span></button>
      <button class="app open" aria-label="WhatsApp"><svg width="30" height="30" viewBox="0 0 30 30"><path d="M0 30l2-8A15 15 0 1 1 8 28z" fill="#fff"/><path d="m3 27 1.500-6A12.500 12.500 0 1 1 9 25.500z" fill="#43c452"/><path d="M10 8q2-1 3 2l1 2-1.500 2q2 3 5 4l2-2 3 1.500q2 1 0 3-3 3-8 0-5-3-7-8 0-3 2.500-4.500z" fill="#fff"/></svg></button>
      <button class="app" aria-label="번개"><svg width="28" height="28" viewBox="0 0 28 28"><circle cx="14" cy="14" r="14" fill="#0f6fdc"/><path d="M16 4 7 15l5 1-1 8 10-11-5-1z" fill="#fff"/></svg></button>

      <div class="tray">
        <button class="weather"><svg width="34" height="30" viewBox="0 0 34 30"><path d="M14 0q4 4 2 9-3 5-13 7 5 3 12 2 8-3 6-11-2-6-7-7z" fill="#f79b1e"/><path d="M8 29q-6 0-6-5t6-6q2-6 8-6 7 0 8 6 7 0 7 6t-6 5z" fill="#93b1f0"/><path d="M8 26q-4-1-4-4t5-3q2-6 7-6 6 1 7 7 5 0 6 3 0 3-4 3z" fill="#d3e0fc"/></svg><span>10°C</span><span>대체로 흐림</span></button>
        <svg class="more" width="18" height="10" viewBox="0 0 18 10"><path d="m1 9 8-8 8 8" fill="none" stroke="#222" stroke-width="1.500"/></svg>
        <svg width="16" height="20" viewBox="0 0 16 20"><path d="M1 6q0-1 1-1h7q1 0 1 1v8q0 1-1 1H2q-1 0-1-1zM10 9l5-3v8l-5-3M2 2q4-2 8 0M2 18q4 2 8 0" fill="none" stroke="#111" stroke-width="1.400"/></svg>
        <svg width="22" height="14" viewBox="0 0 22 14"><path d="M5 13q-5 0-5-4t5-4q2-5 7-5 5 1 6 5 4 1 4 4t-4 4z" fill="#0f6cc4"/><path d="M5 13q-4-1-2-5 5-3 10-1l9 4q-1 2-4 2z" fill="#2aa0ee"/></svg>
        <svg width="22" height="14" viewBox="0 0 22 14"><path d="M6 3h13v9H5V8M20 6h2v3h-2M1 1v3q0 2 2 2t2-2V1M3 6v5M0 3h6" fill="none" stroke="#111" stroke-width="1.300"/><path d="M8 5h7v5H8z"/></svg>
        <svg width="22" height="18" viewBox="0 0 22 18"><path d="M6 2h15v11H3V9M12 13v4M8 17h8M1 1h4v4H1zM3 5v5" fill="none" stroke="#111" stroke-width="1.300"/></svg>
        <svg width="20" height="16" viewBox="0 0 20 16"><path d="M1 5h3l5-4v14l-5-4H1zM12 5l6 6M18 5l-6 6" fill="none" stroke="#111" stroke-width="1.400"/></svg>
        <span class="ime">A</span><span class="hangul">한</span>
        <button class="clock"><span>오후 8:42</span><span>2023-03-25</span></button>
        <button class="notice" aria-label="알림"><svg width="22" height="22" viewBox="0 0 22 22"><path d="M0 0h21v17H9l-5 4v-4H0z"/><path d="M4 5h13M4 8.500h13M4 12h9" stroke="#fff" stroke-width="1.400"/></svg><b>2</b></button>
      </div>
      <button class="show-desktop" aria-label="바탕 화면 보기"></button>
    </nav>

    <div class="watermark"><p>Windows 정품 인증</p><p>[설정]으로 이동하여 Windows를 정품 인증합니다.</p></div>
  </body>
</html>
```
FILE: styles.css
```css
* {
  box-sizing: border-box;
}
body {
  margin: 0;
  min-height: 100vh;
  display: flex;
  flex-direction: column;
  font-family: "Noto Sans CJK KR", "Open Sans", sans-serif;
  font-size: 16px;
  line-height: 20px;
  color: #333;
  background: #f0f0f0;
}
button,
input,
select {
  font: inherit;
  color: inherit;
  background: none;
  border: 0;
  padding: 0;
  margin: 0;
  border-radius: 0;
}
button {
  display: flex;
  align-items: center;
  justify-content: center;
  white-space: nowrap;
}
svg {
  flex: none;
}
button:disabled {
  color: #a8a8a8;
}
.sprite {
  position: absolute;
  width: 0;
  height: 0;
}
.tiny {
  width: 10px;
  height: 10px;
}

/* title bar */
.titlebar {
  display: grid;
  grid-template-columns: 38.5% 24% 1fr;
  align-items: center;
  height: 43px;
  color: #fff;
  background:
    radial-gradient(circle at 70% 90%, #264f8c 0 34px, transparent 35px),
    radial-gradient(circle at 88% 0, #2a5590 0 60px, transparent 61px),
    linear-gradient(90deg, #285697 74%, #264c84 80%, #2a5390);
}
.quick {
  display: flex;
  align-items: center;
  padding-left: 26px;
}
.autosave {
  display: flex;
  align-items: center;
  gap: 10px;
}
.toggle-input {
  position: absolute;
  opacity: 0;
}
.toggle {
  display: flex;
  align-items: center;
  justify-content: space-between;
  width: 47px;
  height: 20px;
  padding: 0 6px 0 4px;
  border: 1px solid #fff;
  border-radius: 10px;
  font-size: 13px;
}
.toggle::before {
  content: "";
  width: 10px;
  height: 10px;
  border-radius: 50%;
  background: #fff;
}
.quick-btn {
  gap: 6px;
  margin-right: 14px;
}
.quick-btn.save {
  margin-left: 15px;
}
.quick-btn.undo {
  margin-right: 12px;
}
.quick-btn.redo {
  margin-right: 18px;
}
.doc-name {
  margin: 0 auto;
}
.search {
  display: flex;
  align-items: center;
  gap: 18px;
  height: 32px;
  padding-left: 24px;
  color: #1d3b6d;
  background: #a3b8ce;
}
.search input {
  flex: 1;
}
input::placeholder {
  color: inherit;
  opacity: 1;
}
.account {
  display: flex;
  align-items: center;
  justify-content: flex-end;
  padding-right: 1px;
}
.user {
  font-size: 14px;
}
.avatar {
  width: 30px;
  height: 30px;
  margin: 0 16px 0 14px;
  border-radius: 50%;
  background: #a4262c;
  font-size: 13px;
  line-height: 30px;
  text-align: center;
}
.win-btn {
  width: 57px;
  height: 40px;
}

/* ribbon tabs */
.tabs {
  display: flex;
  align-items: center;
  gap: 28px;
  height: 41px;
  padding: 0 16px 2px 17px;
  font-size: 18px;
}
.tabs a {
  color: #444;
  text-decoration: none;
  line-height: 28px;
  padding: 2px 0;
  border-bottom: 4px solid transparent;
}
.tabs .file {
  margin-right: 4px;
}
.tabs .active {
  font-weight: 500;
  border-color: #2b579a;
}
.tab-actions {
  display: flex;
  gap: 11px;
  margin-left: auto;
}
.tab-actions button {
  gap: 4px;
  height: 30px;
  padding: 0 9px;
  border: 1px solid #ddd;
  border-radius: 3px;
  background: #fff;
  color: #2b579a;
  font-weight: 500;
}
.tab-actions button:nth-child(2) {
  padding: 0 8px 0 5px;
}
.share-chev {
  margin-left: 8px;
}

/* ribbon */
.ribbon {
  display: flex;
  height: 119px;
  padding: 2px 0 5px;
  border-bottom: 1px solid #c8c8c8;
}
.group {
  display: flex;
  flex-direction: column;
  justify-content: space-between;
  border-right: 1px solid #b4b4b4;
}
.group-label {
  position: relative;
  line-height: 14px;
  text-align: center;
  white-space: nowrap;
}
.with-launcher {
  padding-right: 20px;
}
.launcher {
  position: absolute;
  right: 3px;
  top: 1px;
  width: 12px;
  height: 12px;
}
.group-body {
  display: flex;
}
.clipboard {
  width: 187px;
  padding-left: 10px;
}
.big {
  flex-direction: column;
  justify-content: flex-start;
  width: 100%;
  padding-top: 2px;
  gap: 1px;
}
.big .tiny {
  margin-top: 4px;
}
.big span .tiny {
  margin: 0;
}
.paste {
  width: 62px;
}
.stack {
  display: flex;
  flex-direction: column;
  align-items: flex-start;
}
.stack button {
  height: 29px;
  gap: 4px;
}
.clipboard .stack {
  padding-left: 8px;
}
.clipboard .stack svg {
  width: 20px;
}
.rows {
  display: flex;
  flex-direction: column;
  gap: 9px;
  padding: 9px 0 0 9px;
}
.row {
  display: flex;
  align-items: center;
  height: 30px;
}
.font {
  width: 430px;
}
.para {
  width: 360px;
}
.ib {
  position: relative;
  width: 30px;
  height: 30px;
}
.chev {
  width: 18px;
  height: 30px;
  justify-content: flex-start;
  padding-left: 2px;
}
.para .rows {
  padding-left: 8px;
}
.para .chev {
  width: 19px;
  padding-left: 2px;
}
.sep {
  width: 1px;
  height: 32px;
  margin: 0 2px;
  background: #d0d0d0;
}
.combo {
  position: relative;
  height: 29px;
  border: 1px solid #bbb;
  background: #fff;
}
.combo select {
  appearance: none;
  width: 100%;
  height: 100%;
  padding-left: 3px;
  color: #222;
}
.combo .tiny {
  position: absolute;
  right: 2px;
  top: 10px;
}
.family {
  width: 151px;
  margin-right: 2px;
}
.size {
  width: 46px;
  margin-right: 3px;
}
.g12 {
  font-size: 12px;
  font-weight: 500;
}
.g14 {
  font-size: 15px;
}
.g16 {
  font-size: 17px;
}
.italic {
  font-style: italic;
}
.strike {
  width: 34px;
}
.eraser {
  position: absolute;
  right: 3px;
  bottom: 3px;
}
.ruby {
  flex-direction: column;
  align-items: flex-end;
  padding-right: 4px;
  font-size: 11px;
  line-height: 12px;
}
.ruby b {
  font-weight: 400;
  font-size: 10px;
  color: #2b88c8;
}
.boxed {
  width: 20px;
  height: 20px;
  border: 1px solid #333;
  font-size: 15px;
  line-height: 17px;
}
.script {
  font-size: 17px;
}
.script sub,
.script sup {
  font-size: 10px;
  color: #2b88c8;
}
.script sup {
  margin-bottom: 10px;
}
.script sub {
  margin-top: 12px;
}
.glow {
  color: #1b6fb8;
  font-weight: 700;
  font-size: 18px;
  text-shadow: 0 0 2px #5ba8e0, 0 0 3px #5ba8e0;
}
.fontcolor {
  width: 20px;
  height: 22px;
  border-bottom: 5px solid #f00;
  font-weight: 500;
  line-height: 14px;
}
.shaded {
  width: 20px;
  height: 20px;
  background: #c3c0be;
  font-size: 15px;
}
.circled {
  width: 20px;
  height: 20px;
  border: 1px solid #444;
  border-radius: 50%;
  font-size: 13px;
  line-height: 17px;
}
.num {
  font-size: 8px;
  font-weight: 700;
  fill: #2b88c8;
}
.spread {
  flex-direction: column;
  font-size: 15px;
  line-height: 14px;
}
.sort {
  display: flex;
  flex-direction: column;
  font-size: 10px;
  line-height: 11px;
}
.sort b {
  color: #2b88c8;
}
.pressed {
  border: 1px solid #888;
  background: #cdcbc9;
}

/* styles gallery */
.styles {
  flex: 1;
}
.gallery {
  display: flex;
  height: 75px;
  margin: 2px 13px 0 11px;
  border: 1px solid #c6c6c6;
  background: #fff;
}
.style {
  flex: 1;
  flex-direction: column;
  justify-content: space-between;
  min-width: 0;
  margin: 1px 0;
  padding: 0 5px 5px;
  overflow: hidden;
  color: #555;
}
.style small {
  font-size: 10px;
}
.selected {
  border: 4px solid #c9c7c5;
  outline: 1px solid #888;
  outline-offset: -1px;
  padding: 0 0 1px;
}
.preview {
  display: flex;
  align-items: center;
  width: 78px;
  height: 45px;
  overflow: hidden;
  font-size: 19px;
  font-weight: 300;
  color: #000;
}
.selected .preview {
  height: 41px;
}
.preview.h1 {
  width: 76px;
  font-size: 29px;
  line-height: 40px;
  color: #2f5496;
}
.preview.h2 {
  width: 76px;
  font-size: 24px;
  line-height: 40px;
  color: #2f5496;
}
.preview.title {
  align-items: flex-start;
  height: 38px;
  width: 72px;
  font-size: 46px;
  font-weight: 400;
  line-height: 60px;
}
.gallery-nav {
  display: flex;
  flex-direction: column;
  width: 19px;
  border-left: 1px solid #bbb;
  background: #f0f0f0;
}
.gallery-nav button {
  flex: 1;
}
.gallery-nav button + button {
  border-top: 1px solid #bbb;
}
.up {
  transform: rotate(180deg);
}
.editing {
  width: 107px;
}
.editing .stack {
  padding-left: 14px;
}
.editing .stack button {
  height: 28px;
}
.far {
  margin-left: 8px;
}
.swap {
  position: relative;
  width: 20px;
  height: 22px;
  font-size: 10px;
  line-height: 11px;
  text-align: center;
}
.swap b {
  position: absolute;
  right: 0;
  bottom: 0;
  color: #2b88c8;
}
.swap svg {
  position: absolute;
  left: 0;
  bottom: 0;
}
.narrow {
  width: 72px;
}
.reuse {
  width: 90px;
}
.reuse .big {
  padding-top: 6px;
}
.collapse {
  align-self: flex-end;
  padding: 4px 10px;
}

/* workspace */
.workspace {
  flex: 1;
  display: flex;
  background: #e6e6e6;
}
.canvas {
  flex: 1;
  display: flex;
  justify-content: center;
}
.page {
  width: 77%;
  background: #fff;
  border: 1px solid #c6c6c6;
  border-width: 0 1px;
}
.margins {
  display: flex;
  justify-content: space-between;
  padding: 69px 106px 0;
}
.corner {
  width: 36px;
  height: 36px;
  border-bottom: 1px solid #b0b0b0;
}
.corner.left {
  border-right: 1px solid #b0b0b0;
}
.corner.right {
  border-left: 1px solid #b0b0b0;
}
.charts {
  width: 726px;
  margin: 76px auto 0;
  color: #595959;
  font-family: "Open Sans", sans-serif;
}
.plots {
  display: grid;
  grid-template-columns: 1fr 1fr;
}
.plot h2 {
  margin: 0 0 27px;
  font-size: 21px;
  line-height: 32px;
  font-weight: 400;
  text-align: center;
}
.plot-body {
  display: flex;
  gap: 18px;
  font-size: 17px;
}
.cats {
  width: 94px;
}
.cats,
.bars {
  display: flex;
  flex-direction: column;
  gap: 30px;
  padding: 15px 0;
  text-align: right;
}
.cats span {
  line-height: 22px;
}
.bars {
  width: 231px;
  border-left: 1px solid #d0d0d0;
}
.bar {
  display: flex;
  height: 22px;
  padding: 1px 0;
}
.bar span {
  display: flex;
  flex: none;
  align-items: center;
  justify-content: center;
  line-height: 20px;
}
.coal {
  background: #1a050c;
  color: #bfbfbf;
}
.oil {
  background: #432b49;
  color: #a6a6a6;
}
.gas {
  background: #69646e;
  color: #a6a6a6;
}
.nuclear {
  background: #a4b898;
  color: #8a8f86;
}
.renew {
  background: #a9e68f;
  color: #7f8f79;
}
.legend {
  display: flex;
  justify-content: space-between;
  padding: 33px 54px 0 63px;
  line-height: 22px;
}
.legend span {
  display: flex;
  align-items: center;
  gap: 4px;
}
.legend i {
  width: 11px;
  height: 11px;
}
.caret {
  width: 1px;
  height: 40px;
  margin: 140px auto 0;
  background: #000;
}
.scrollbar {
  display: flex;
  flex-direction: column;
  width: 21px;
  padding: 2px 1px 2px 0;
  border-right: 1px solid #b8b8b8;
}
.scrollbar button {
  height: 19px;
  border: 1px solid #777;
  background: #fff;
}
.track {
  flex: 1;
  padding-top: 40px;
  background: #f0f0f0;
}
.thumb {
  height: 49%;
  border: 1px solid #888;
  background: #fff;
}
.panel {
  width: 356px;
  padding: 12px 15px 0 13px;
}
.panel-head {
  display: flex;
  align-items: flex-start;
  gap: 24px;
  padding: 0 6px 0 3px;
}
.panel h1 {
  flex: 1;
  margin: 0;
  font-size: 29px;
  line-height: 36px;
  font-weight: 400;
  color: #222;
}
.panel-head button {
  height: 30px;
}
.panel-tabs {
  display: flex;
  gap: 12px;
  margin-top: 10px;
  padding-left: 5px;
}
.panel-tabs button {
  width: 38px;
  height: 38px;
}
.panel-tabs .on {
  background: #c4c4c4;
}
.panel-line {
  height: 19px;
  padding: 8px 0 0 62px;
  border-bottom: 1px solid #c3c3c3;
}
.panel-line svg {
  display: block;
}
.effects {
  margin: 0;
  padding: 0 0 0 14px;
  list-style: none;
}
.effects button {
  gap: 9px;
  height: 33px;
  font-weight: 500;
  color: #222;
}

/* status bar */
.status {
  display: flex;
  align-items: center;
  height: 28px;
  padding-left: 9px;
  gap: 23px;
  border-top: 1px solid #c0c0c0;
  color: #444;
}
.access {
  display: flex;
  gap: 4px;
}
.views {
  display: flex;
  align-items: center;
  align-self: stretch;
  margin-left: auto;
  padding-right: 11px;
}
.focus {
  gap: 4px;
  margin-right: 12px;
}
.view {
  width: 50px;
  align-self: stretch;
}
.current {
  background: #cfcbc9;
}
.zoom-btn {
  width: 16px;
}
.view + .zoom-btn {
  margin-left: 4px;
}
.status input {
  appearance: none;
  width: 127px;
  height: 16px;
  background: linear-gradient(#444, #444) center / 100% 1px no-repeat;
}
.status input::-webkit-slider-thumb {
  appearance: none;
  width: 6px;
  height: 16px;
  background: #333;
}
.zoom-value {
  margin-left: 14px;
  font-size: 15px;
}

/* taskbar */
.taskbar {
  display: flex;
  height: 50px;
  background: linear-gradient(90deg, #c9e5ee, #d0e2ea 45%, #d2dcea);
  color: #111;
}
.start {
  width: 60px;
}
.task-search {
  display: flex;
  align-items: center;
  width: 360px;
  padding-left: 15px;
  gap: 14px;
  border: 1px solid #c0c4c8;
  background: #fff;
  font-size: 19px;
}
.task-search input {
  flex: 1;
  min-width: 0;
}
.app {
  position: relative;
  width: 62px;
}
.open::after {
  content: "";
  position: absolute;
  left: 6px;
  right: 6px;
  bottom: 0;
  height: 3px;
  background: #1275d2;
}
.partial::after {
  background: linear-gradient(90deg, #1275d2 80%, #76aee0 80%);
}
.active.app {
  background: #eaf4f6;
}
.active::after {
  left: 0;
  right: 0;
}
.logo {
  font: 700 13px "Open Sans", sans-serif;
  fill: #fff;
  text-anchor: middle;
}
.adobe {
  width: 28px;
  height: 28px;
  border: 2px solid;
  font: 700 15px/23px "Open Sans", sans-serif;
}
.id {
  color: #e5409a;
  background: #4a1731;
}
.ps {
  color: #93c0ee;
  background: #261b60;
}
.ai {
  color: #f0a62d;
  background: #3d2a12;
}
.tray {
  display: flex;
  align-items: center;
  gap: 9px;
  margin-left: auto;
  padding-right: 14px;
}
.weather {
  gap: 8px;
  margin-right: 20px;
  font-size: 19px;
}
.weather span + span {
  margin-left: 4px;
}
.more {
  margin-right: 5px;
}
.hangul {
  width: 21px;
  height: 21px;
  margin-left: 10px;
  border: 1px solid #555;
  background: #fff;
  font-size: 16px;
  line-height: 18px;
  text-align: center;
}
.ime {
  font-size: 25px;
}
.clock {
  flex-direction: column;
  gap: 3px;
  margin: 0 13px 0 11px;
  font-size: 15px;
}
.notice {
  position: relative;
  width: 31px;
  height: 30px;
  align-items: flex-start;
  justify-content: flex-start;
}
.notice b {
  position: absolute;
  right: 0;
  bottom: -4px;
  width: 20px;
  height: 20px;
  border: 1px solid #888;
  border-radius: 50%;
  background: #d3d8de;
  font-size: 14px;
  line-height: 18px;
}
.show-desktop {
  width: 6px;
  border-left: 1px solid #a9b3bf;
}

/* activation notice that floats over the windows */
.watermark {
  position: fixed;
  left: 1444px;
  bottom: 95px;
  color: #b2b2b2;
  font-size: 19px;
  line-height: 30px;
  white-space: nowrap;
}
.watermark p {
  margin: 0;
}
.watermark p:first-child {
  font-size: 26px;
}
```
